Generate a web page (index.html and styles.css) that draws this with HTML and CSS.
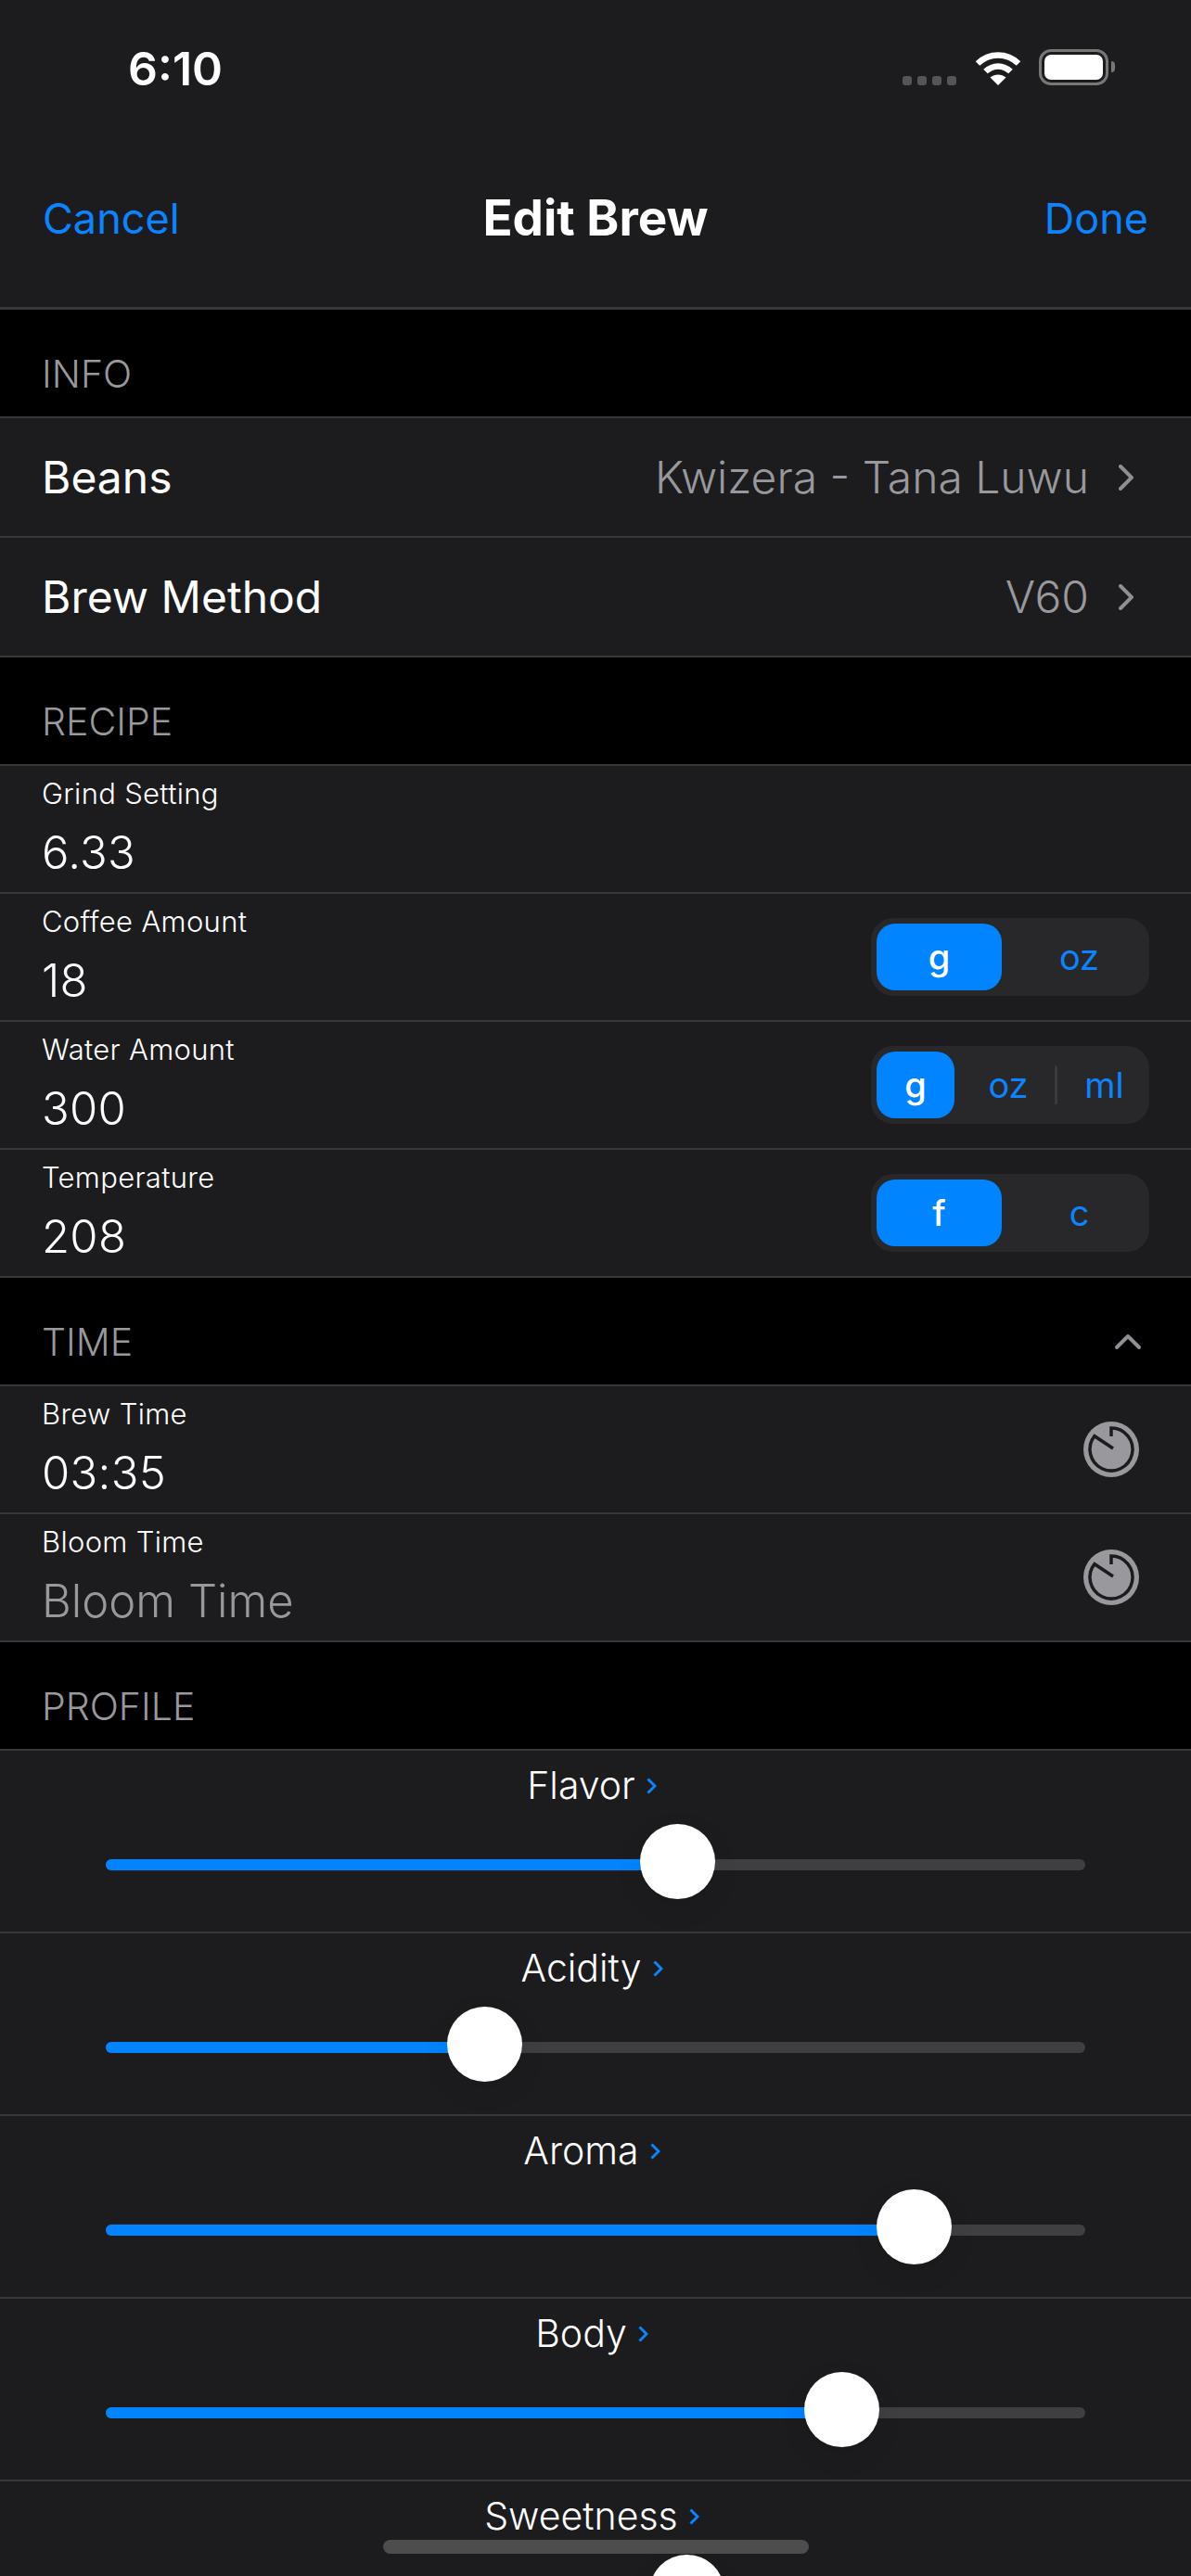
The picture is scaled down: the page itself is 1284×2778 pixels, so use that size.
FILE: index.html
```html
<!DOCTYPE html>
<html lang="en">
<head>
    <meta charset="UTF-8">
    <meta name="viewport" content="width=device-width, initial-scale=1.0">
    <title>Edit Brew</title>
    <link rel="stylesheet" href="styles.css">
</head>
<body>
    <div class="screen">
        <header class="top">
            <div class="status">
                <span class="clock">6:10</span>
                <div class="status-icons">
                    <div class="signal"><i></i><i></i><i></i><i></i></div>
                    <svg class="wifi" width="50" height="37" viewBox="0 0 50 37">
                        <path d="M3 13.5C15.5 1.5 34.5 1.5 47 13.5" fill="none" stroke="#fff" stroke-width="6.5"/>
                        <path d="M11.5 22C19.5 14.5 30.5 14.5 38.5 22" fill="none" stroke="#fff" stroke-width="6.5"/>
                        <path d="M25 37L16.5 28.5C21.5 24.5 28.5 24.5 33.5 28.5Z" fill="#fff"/>
                    </svg>
                    <div class="battery"><div class="battery-level"></div></div>
                    <div class="battery-nub"></div>
                </div>
            </div>
            <nav class="nav">
                <a class="nav-link">Cancel</a>
                <h1 class="nav-title">Edit Brew</h1>
                <a class="nav-link done">Done</a>
            </nav>
        </header>

        <div class="section-head">INFO</div>
        <div class="row pick">
            <span class="pick-name">Beans</span>
            <span class="pick-value">Kwizera - Tana Luwu</span>
            <svg class="chevron" width="16" height="28" viewBox="0 0 16 28"><path d="M2 2l12 12L2 26" /></svg>
        </div>
        <div class="row pick">
            <span class="pick-name">Brew Method</span>
            <span class="pick-value">V60</span>
            <svg class="chevron" width="16" height="28" viewBox="0 0 16 28"><path d="M2 2l12 12L2 26" /></svg>
        </div>

        <div class="section-head">RECIPE</div>
        <div class="row field">
            <div class="field-text">
                <span class="field-label">Grind Setting</span>
                <span class="field-value">6.33</span>
            </div>
        </div>
        <div class="row field">
            <div class="field-text">
                <span class="field-label">Coffee Amount</span>
                <span class="field-value">18</span>
            </div>
            <div class="segments">
                <span class="seg on">g</span>
                <span class="seg">oz</span>
            </div>
        </div>
        <div class="row field">
            <div class="field-text">
                <span class="field-label">Water Amount</span>
                <span class="field-value">300</span>
            </div>
            <div class="segments three">
                <span class="seg on">g</span>
                <span class="seg">oz</span>
                <span class="seg-line"></span>
                <span class="seg">ml</span>
            </div>
        </div>
        <div class="row field">
            <div class="field-text">
                <span class="field-label">Temperature</span>
                <span class="field-value">208</span>
            </div>
            <div class="segments">
                <span class="seg on">f</span>
                <span class="seg">c</span>
            </div>
        </div>

        <div class="section-head">
            <span>TIME</span>
            <svg class="collapse" width="30" height="18" viewBox="0 0 30 18"><path d="M3 15L15 3l12 12" /></svg>
        </div>
        <div class="row field">
            <div class="field-text">
                <span class="field-label">Brew Time</span>
                <span class="field-value">03:35</span>
            </div>
            <svg class="timer" width="60" height="60" viewBox="0 0 60 60">
                <circle cx="30" cy="30" r="30" />
                <path d="M30 16V7A23 23 0 1 1 12 15.7L32 29" />
            </svg>
        </div>
        <div class="row field">
            <div class="field-text">
                <span class="field-label">Bloom Time</span>
                <span class="field-value empty">Bloom Time</span>
            </div>
            <svg class="timer" width="60" height="60" viewBox="0 0 60 60">
                <circle cx="30" cy="30" r="30" />
                <path d="M30 16V7A23 23 0 1 1 12 15.7L32 29" />
            </svg>
        </div>

        <div class="section-head">PROFILE</div>
        <div class="row rating">
            <div class="rating-name">Flavor<svg class="mini-chevron" width="11" height="18" viewBox="0 0 11 18"><path d="M1.5 1.5l7.5 7.5-7.5 7.5" /></svg></div>
            <div class="track"><div class="fill" style="width: 58.3%"></div><div class="thumb" style="left: 58.3%"></div></div>
        </div>
        <div class="row rating">
            <div class="rating-name">Acidity<svg class="mini-chevron" width="11" height="18" viewBox="0 0 11 18"><path d="M1.5 1.5l7.5 7.5-7.5 7.5" /></svg></div>
            <div class="track"><div class="fill" style="width: 38.6%"></div><div class="thumb" style="left: 38.6%"></div></div>
        </div>
        <div class="row rating">
            <div class="rating-name">Aroma<svg class="mini-chevron" width="11" height="18" viewBox="0 0 11 18"><path d="M1.5 1.5l7.5 7.5-7.5 7.5" /></svg></div>
            <div class="track"><div class="fill" style="width: 82.5%"></div><div class="thumb" style="left: 82.5%"></div></div>
        </div>
        <div class="row rating">
            <div class="rating-name">Body<svg class="mini-chevron" width="11" height="18" viewBox="0 0 11 18"><path d="M1.5 1.5l7.5 7.5-7.5 7.5" /></svg></div>
            <div class="track"><div class="fill" style="width: 75.1%"></div><div class="thumb" style="left: 75.1%"></div></div>
        </div>
        <div class="row rating">
            <div class="rating-name">Sweetness<svg class="mini-chevron" width="11" height="18" viewBox="0 0 11 18"><path d="M1.5 1.5l7.5 7.5-7.5 7.5" /></svg></div>
            <div class="track"><div class="fill" style="width: 59.3%"></div><div class="thumb" style="left: 59.3%"></div></div>
        </div>

        <div class="home-bar"></div>
    </div>
</body>
</html>
```

FILE: styles.css
```css
* {
    box-sizing: border-box;
}
body {
    margin: 0;
    background-color: #000;
    font-family: Inter, "Liberation Sans", sans-serif;
    color: #fff;
}
.screen {
    position: relative;
    width: 1284px;
    height: 2778px;
    overflow: hidden;
    background-color: #000;
}

/* status bar + nav */
.top {
    height: 334px;
    background-color: #1c1c1e;
    border-bottom: 3px solid #38383a;
}
.status {
    display: flex;
    justify-content: space-between;
    align-items: flex-start;
    height: 185px;
    padding: 46px 82px 0 138px;
}
.clock {
    font-size: 50px;
    line-height: 56px;
    font-weight: 600;
}
.status-icons {
    display: flex;
    align-items: flex-end;
    margin-top: 7px;
}
.signal {
    display: flex;
    gap: 6px;
    margin-right: 20px;
}
.signal i {
    width: 10px;
    height: 10px;
    border-radius: 3px;
    background-color: #555;
}
.wifi {
    margin-right: 19px;
}
.battery {
    width: 75px;
    height: 39px;
    padding: 3px;
    border: 3px solid #777;
    border-radius: 13px;
}
.battery-level {
    height: 100%;
    border-radius: 7px;
    background-color: #fff;
}
.battery-nub {
    width: 4px;
    height: 12px;
    margin: 0 0 14px 3px;
    border-radius: 0 4px 4px 0;
    background-color: #777;
}
.nav {
    display: grid;
    grid-template-columns: 1fr auto 1fr;
    align-items: center;
    height: 100px;
    padding: 0 46px;
}
.nav-link {
    font-size: 45px;
    color: #0a84ff;
}
.nav-link.done {
    justify-self: end;
}
.nav-title {
    margin: 0;
    font-size: 53px;
    font-weight: 700;
}

/* sections */
.section-head {
    display: flex;
    justify-content: space-between;
    align-items: center;
    height: 117px;
    padding: 22px 46px 0 45px;
    background-color: #000;
    border-bottom: 2px solid #38383a;
    font-size: 41px;
    font-weight: 300;
    color: #98989d;
}
.collapse {
    margin-right: 7px;
}
.collapse path {
    fill: none;
    stroke: #8e8e93;
    stroke-width: 4;
    stroke-linecap: round;
    stroke-linejoin: round;
}
.row {
    background-color: #1c1c1e;
    border-bottom: 2px solid #38383a;
}

/* Beans / Brew Method */
.pick {
    display: flex;
    align-items: center;
    height: 129px;
    padding: 0 62px 0 45px;
    font-size: 48px;
}
.pick-name {
    flex: 1;
}
.pick-value {
    margin-right: 32px;
    font-weight: 300;
    color: #98989d;
}
.chevron path {
    fill: none;
    stroke: #8e8e93;
    stroke-width: 4;
    stroke-linecap: round;
}

/* label + value rows */
.field {
    display: flex;
    justify-content: space-between;
    align-items: center;
    height: 138px;
    padding: 0 45px;
}
.field-text {
    display: flex;
    flex-direction: column;
}
.field-label {
    font-size: 31px;
    line-height: 38px;
    font-weight: 300;
    letter-spacing: 0.3px;
}
.field-value {
    margin-top: 13px;
    font-size: 49px;
    line-height: 64px;
    font-weight: 300;
    letter-spacing: 0.3px;
}
.field-value.empty {
    letter-spacing: 0;
    color: #98989d;
}
.timer {
    margin-right: 11px;
}
.timer circle {
    fill: #98989d;
}
.timer path {
    fill: none;
    stroke: #1c1c1e;
    stroke-width: 3.5;
}

/* unit picker */
.segments {
    display: grid;
    grid-template-columns: 135px 153px;
    align-items: center;
    width: 300px;
    height: 84px;
    padding: 6px;
    border-radius: 24px;
    background-color: #28282a;
}
.segments.three {
    grid-template-columns: 84px 108px 3px 1fr;
}
.seg {
    display: flex;
    justify-content: center;
    align-items: center;
    height: 72px;
    padding-left: 14px;
    font-size: 38px;
    color: #0a84ff;
}
.three .seg {
    padding-left: 8px;
}
.seg.on,
.three .seg.on {
    padding-left: 0;
    border-radius: 20px;
    background-color: #0084ff;
    font-weight: 500;
    color: #fff;
}
.seg-line {
    height: 42px;
    border-radius: 2px;
    background-color: #3a3a3c;
}

/* sliders */
.rating {
    height: 197px;
    padding: 15px 114px 0;
}
.rating-name {
    display: flex;
    justify-content: center;
    align-items: center;
    gap: 12px;
    height: 44px;
    padding-right: 8px;
    font-size: 41px;
    font-weight: 300;
}
.mini-chevron {
    margin-top: 2px;
}
.mini-chevron path {
    fill: none;
    stroke: #0a84ff;
    stroke-width: 3;
}
.track {
    position: relative;
    height: 12px;
    margin-top: 58px;
    border-radius: 6px;
    background-color: #3f3f41;
}
.fill {
    height: 100%;
    border-radius: 6px 0 0 6px;
    background-color: #0084ff;
}
.thumb {
    position: absolute;
    top: -38px;
    width: 81px;
    height: 81px;
    margin-left: -40px;
    border-radius: 50%;
    background-color: #fff;
    box-shadow: 0 10px 30px rgba(0, 0, 0, 0.08);
}

.home-bar {
    position: absolute;
    left: 413px;
    top: 2739px;
    width: 459px;
    height: 15px;
    border-radius: 8px;
    background-color: #4d4d4d;
}
```
